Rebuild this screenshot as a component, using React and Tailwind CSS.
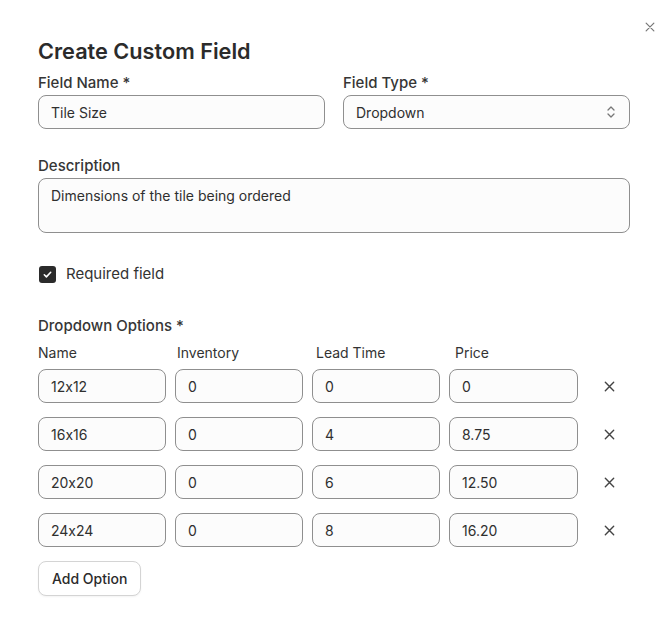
import React from "react";

const rows = [
  ["12x12", "0", "0", "0"],
  ["16x16", "0", "4", "8.75"],
  ["20x20", "0", "6", "12.50"],
  ["24x24", "0", "8", "16.20"],
];

function Input({ value, className = "" }) {
  return (
    <div className={"h-[34px] rounded-[8px] border border-[#8f8f8f] bg-[#fcfcfc] flex items-center px-[12px] text-[14px] text-[#2f2f2f] " + className}>
      {value}
    </div>
  );
}

function XIcon({ size = 14, color = "#3a3a3a", sw = 1.6 }) {
  return (
    <svg width={size} height={size} viewBox="0 0 14 14" fill="none">
      <path d="M2.5 2.5l9 9M11.5 2.5l-9 9" stroke={color} strokeWidth={sw} strokeLinecap="round" />
    </svg>
  );
}

export default function App() {
  return (
    <div className="relative w-[671px] h-[623px] bg-white text-[#2f2f2f] [font-feature-settings:'calt'_0]" style={{ fontFamily: "Inter, 'Noto Sans', sans-serif" }}>
      <button className="absolute right-[15px] top-[21px] p-0">
        <XIcon size={12} color="#777" sw={1.4} />
      </button>
      <div className="px-[38px] pt-[37px] w-[668px]">
        <h1 className="text-[21.7px] leading-[28px] font-semibold text-[#2b2b2b]">Create Custom Field</h1>
        <div className="mt-[8px] grid grid-cols-2 gap-x-[18px]">
          <div>
            <div className="text-[15px] leading-[20px] font-medium text-[#363636]">Field Name *</div>
            <Input value="Tile Size" className="mt-[2px]" />
          </div>
          <div>
            <div className="text-[15px] leading-[20px] font-medium text-[#363636]">Field Type *</div>
            <div className="mt-[2px] h-[34px] rounded-[8px] border border-[#8f8f8f] bg-[#fcfcfc] flex items-center justify-between px-[12px] text-[14px] text-[#2f2f2f]">
              <span>Dropdown</span>
              <svg width="12" height="16" viewBox="0 0 12 16" fill="none">
                <path d="M3 6l3-3 3 3M3 10l3 3 3-3" stroke="#777" strokeWidth="1.3" strokeLinecap="round" strokeLinejoin="round" />
              </svg>
            </div>
          </div>
        </div>
        <div className="mt-[27px]">
          <div className="text-[15px] leading-[20px] font-medium text-[#363636]">Description</div>
          <div className="mt-[2px] h-[55px] rounded-[8px] border border-[#8f8f8f] bg-[#fcfcfc] px-[12px] pt-[6px] text-[14px] text-[#2f2f2f]">
            Dimensions of the tile being ordered
          </div>
        </div>
        <div className="mt-[31px] flex items-center gap-[10px] pl-[1px]">
          <div className="w-[17px] h-[17px] rounded-[3px] bg-[#2b2b2b] flex items-center justify-center">
            <svg width="11" height="11" viewBox="0 0 12 12" fill="none">
              <path d="M2.5 6.3l2.3 2.3 4.7-5" stroke="white" strokeWidth="1.7" strokeLinecap="round" strokeLinejoin="round" />
            </svg>
          </div>
          <span className="text-[15px] leading-[20px] text-[#333]">Required field</span>
        </div>
        <div className="mt-[32px] text-[15px] leading-[20px] font-medium text-[#363636]">Dropdown Options *</div>
        <div className="mt-[7px] grid grid-cols-[128px_128px_128px_129px_1fr] gap-x-[9px] text-[14px] leading-[20px] text-[#333]">
          <div>Name</div>
          <div className="pl-[2px]">Inventory</div>
          <div className="pl-[4px]">Lead Time</div>
          <div className="pl-[6px]">Price</div>
          <div></div>
        </div>
        <div className="mt-[6px] flex flex-col gap-[14px]">
          {rows.map((r, i) => (
            <div key={i} className="grid grid-cols-[128px_128px_128px_129px_1fr] gap-x-[9px] items-center">
              {r.map((v, j) => (
                <Input key={j} value={v} />
              ))}
              <div className="flex justify-center pl-[1px]">
                <XIcon size={13} color="#444" sw={1.5} />
              </div>
            </div>
          ))}
        </div>
        <button className="mt-[14px] h-[35px] px-[13px] rounded-[8px] border border-[#d4d4d4] bg-white text-[14px] font-medium text-[#2b2b2b] shadow-[0_1px_2px_rgba(0,0,0,0.05)]">
          Add Option
        </button>
      </div>
    </div>
  );
}
